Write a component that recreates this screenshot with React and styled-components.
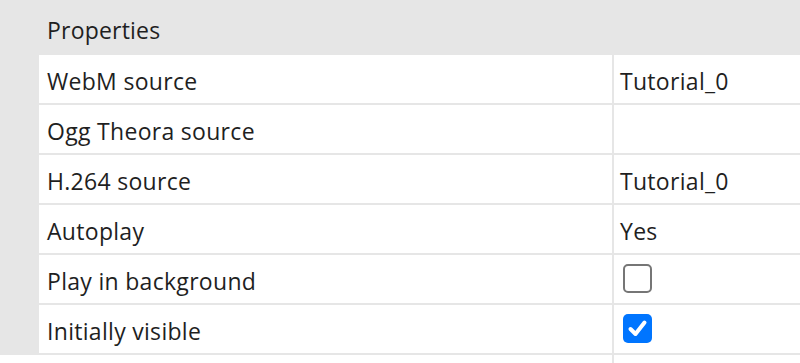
import styled, { createGlobalStyle } from "styled-components";

const Global = createGlobalStyle`
    html, body {
        margin: 0;
        padding: 0;
        background: #fff;
    }
    body {
        font-family: "Open Sans", "Noto Sans", sans-serif;
        color: #1f1f1f;
    }
`;

const Panel = styled.div`
    width: 800px;
    height: 363px;
    overflow: hidden;
    background: #e6e6e6;
    display: flex;
    flex-direction: column;
`;

const Header = styled.div`
    height: 55px;
    display: flex;
    align-items: center;
    padding-left: 47px;
    font-size: 23px;
    letter-spacing: 0.2px;
    padding-top: 4px;
    box-sizing: border-box;
`;

const Grid = styled.div`
    display: grid;
    grid-template-columns: 573px 1fr;
    grid-auto-rows: 48px;
    gap: 2px;
    margin-left: 39px;
    padding-bottom: 2px;
`;

const Cell = styled.div`
    background: #fff;
    display: flex;
    align-items: center;
    padding-left: ${(p) => (p.$value ? "6px" : "8px")};
    font-size: 23px;
    letter-spacing: 0.3px;
    padding-top: 4px;
    box-sizing: border-box;
`;

const Footer = styled.div`
    flex: 1;
    display: grid;
    grid-template-columns: 612px 1fr;
    gap: 2px;
`;

const Blank = styled.div`
    background: #fff;
`;

const Box = styled.span`
    width: 29px;
    height: 29px;
    margin-left: 3px;
    margin-top: -6px;
    box-sizing: border-box;
    border-radius: 5px;
    border: ${(p) => (p.$checked ? "none" : "2px solid #767676")};
    background: ${(p) => (p.$checked ? "#0075ff" : "#fff")};
    display: flex;
    align-items: center;
    justify-content: center;
`;

function Checkbox({ checked }) {
    return (
        <Box $checked={checked}>
            {checked && (
                <svg width="23" height="23" viewBox="0 0 23 23">
                    <path d="M4.5 12 L9.5 17 L18.5 5.5" fill="none" stroke="#fff" strokeWidth="4" strokeLinecap="round" strokeLinejoin="round" />
                </svg>
            )}
        </Box>
    );
}

const rows = [
    ["WebM source", "Tutorial_0"],
    ["Ogg Theora source", ""],
    ["H.264 source", "Tutorial_0"],
    ["Autoplay", "Yes"],
    ["Play in background", false],
    ["Initially visible", true],
];

export default function App() {
    return (
        <>
            <Global />
            <Panel>
                <Header>Properties</Header>
                <Grid>
                    {rows.map(([name, value]) => (
                        <>
                            <Cell key={name}>{name}</Cell>
                            <Cell $value key={name + "v"}>
                                {typeof value === "boolean" ? <Checkbox checked={value} /> : value}
                            </Cell>
                        </>
                    ))}
                </Grid>
                <Footer>
                    <Blank />
                    <Blank />
                </Footer>
            </Panel>
        </>
    );
}
